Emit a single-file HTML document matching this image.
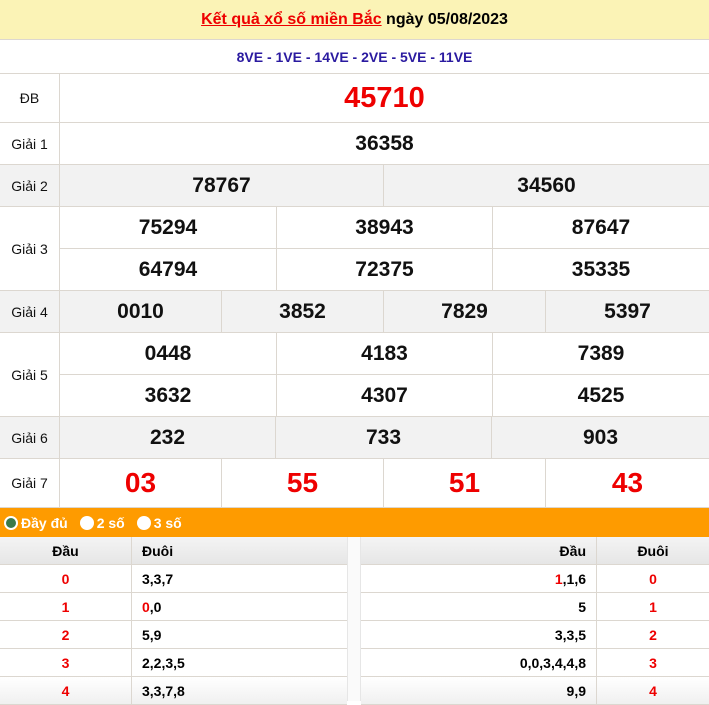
<!DOCTYPE html><html><head><meta charset="utf-8"><style>
*{margin:0;padding:0;box-sizing:border-box}
body{width:709px;height:701px;overflow:hidden;background:#fff;font-family:"Liberation Sans",Arial,sans-serif;position:relative}
.r{position:absolute;left:0;width:709px;display:flex;border-bottom:1px solid #dcd7d0}
.c{display:flex;align-items:center;justify-content:center;border-left:1px solid #dcd7d0;font-weight:bold;font-size:21px;color:#111;height:100%}
.c:first-child{border-left:none}
.l{width:59px;font-weight:normal;font-size:14px}
.g{background:#f2f2f2}
.red{color:#e00}
.sub{display:flex;flex-direction:column;flex:1;border-left:1px solid #dcd7d0}
.sub>div{flex:1;display:flex;border-bottom:1px solid #dcd7d0}
.sub>div:last-child{border-bottom:none}
.t{position:absolute;display:flex;align-items:center;font-size:14px;font-weight:bold;border-bottom:1px solid #dcd7d0;height:28px}
.t div{height:100%;display:flex;align-items:center}
</style></head><body>
<div class="r" style="top:0;height:40px;background:#fbf3b6;justify-content:center;align-items:center;font-size:16px;font-weight:bold"><span style="color:#e00;text-decoration:underline">Kết quả xổ số miền Bắc</span>&nbsp;ngày 05/08/2023</div>
<div class="r" style="top:40px;height:34px;justify-content:center;align-items:center;font-size:14px;font-weight:bold;color:#2a1aa0">8VE - 1VE - 14VE - 2VE - 5VE - 11VE</div>
<div class="r" style="top:74px;height:49px"><div class="c l">ĐB</div><div class="c red" style="flex:1;font-size:29px">45710</div></div>
<div class="r" style="top:123px;height:42px"><div class="c l">Giải 1</div><div class="c" style="flex:1">36358</div></div>
<div class="r g" style="top:165px;height:42px"><div class="c l">Giải 2</div><div class="c" style="width:324px">78767</div><div class="c" style="flex:1">34560</div></div>
<div class="r" style="top:207px;height:84px"><div class="c l">Giải 3</div><div class="sub"><div><div class="c" style="width:216px">75294</div><div class="c" style="width:216px">38943</div><div class="c" style="flex:1">87647</div></div><div><div class="c" style="width:216px">64794</div><div class="c" style="width:216px">72375</div><div class="c" style="flex:1">35335</div></div></div></div>
<div class="r g" style="top:291px;height:42px"><div class="c l">Giải 4</div><div class="c" style="width:162px">0010</div><div class="c" style="width:162px">3852</div><div class="c" style="width:162px">7829</div><div class="c" style="flex:1">5397</div></div>
<div class="r" style="top:333px;height:84px"><div class="c l">Giải 5</div><div class="sub"><div><div class="c" style="width:216px">0448</div><div class="c" style="width:216px">4183</div><div class="c" style="flex:1">7389</div></div><div><div class="c" style="width:216px">3632</div><div class="c" style="width:216px">4307</div><div class="c" style="flex:1">4525</div></div></div></div>
<div class="r g" style="top:417px;height:42px"><div class="c l">Giải 6</div><div class="c" style="width:216px">232</div><div class="c" style="width:216px">733</div><div class="c" style="flex:1">903</div></div>
<div class="r" style="top:459px;height:49px"><div class="c l">Giải 7</div><div class="c red" style="width:162px;font-size:28px">03</div><div class="c red" style="width:162px;font-size:28px">55</div><div class="c red" style="width:162px;font-size:28px">51</div><div class="c red" style="flex:1;font-size:28px">43</div></div>
<div style="position:absolute;top:508px;left:0;width:709px;height:29px;background:#fe9b00;display:flex;align-items:center;color:#fff;font-weight:bold;font-size:14px;padding-left:4px">
<span style="width:14px;height:14px;border-radius:50%;background:#3b7a4a;border:2px solid #fff;display:inline-block;margin-right:3px"></span>Đầy đủ
<span style="width:14px;height:14px;border-radius:50%;background:#fff;display:inline-block;margin:0 3px 0 12px"></span>2 số
<span style="width:14px;height:14px;border-radius:50%;background:#fff;display:inline-block;margin:0 3px 0 12px"></span>3 số</div>
<div style="position:absolute;top:537px;left:347px;width:14px;height:164px;background:#fafafa;border-left:1px solid #e6e6e6;border-right:1px solid #e6e6e6"></div>
<div class="t" style="top:537px;left:0;width:347px;background:linear-gradient(#f4f4f4,#e6e6e6)"><div style="width:131px;justify-content:center">Đầu</div><div style="border-left:1px solid #dcd7d0;padding-left:10px;flex:1">Đuôi</div></div>
<div class="t" style="top:537px;left:361px;width:348px;background:linear-gradient(#f4f4f4,#e6e6e6)"><div style="width:235px;justify-content:flex-end;padding-right:10px">Đầu</div><div style="border-left:1px solid #dcd7d0;flex:1;justify-content:center">Đuôi</div></div>
<div class="t" style="top:565px;left:0;width:347px"><div class="red" style="width:131px;justify-content:center">0</div><div style="border-left:1px solid #dcd7d0;padding-left:10px;flex:1">3,3,7</div></div>
<div class="t" style="top:593px;left:0;width:347px"><div class="red" style="width:131px;justify-content:center">1</div><div style="border-left:1px solid #dcd7d0;padding-left:10px;flex:1"><span class="red">0</span>,0</div></div>
<div class="t" style="top:621px;left:0;width:347px"><div class="red" style="width:131px;justify-content:center">2</div><div style="border-left:1px solid #dcd7d0;padding-left:10px;flex:1">5,9</div></div>
<div class="t" style="top:649px;left:0;width:347px"><div class="red" style="width:131px;justify-content:center">3</div><div style="border-left:1px solid #dcd7d0;padding-left:10px;flex:1">2,2,3,5</div></div>
<div class="t" style="top:677px;left:0;width:347px;background:linear-gradient(#fff,#f0f0f0)"><div class="red" style="width:131px;justify-content:center">4</div><div style="border-left:1px solid #dcd7d0;padding-left:10px;flex:1">3,3,7,8</div></div>
<div class="t" style="top:565px;left:361px;width:348px"><div style="width:235px;justify-content:flex-end;padding-right:10px"><span class="red">1</span>,1,6</div><div class="red" style="border-left:1px solid #dcd7d0;flex:1;justify-content:center">0</div></div>
<div class="t" style="top:593px;left:361px;width:348px"><div style="width:235px;justify-content:flex-end;padding-right:10px">5</div><div class="red" style="border-left:1px solid #dcd7d0;flex:1;justify-content:center">1</div></div>
<div class="t" style="top:621px;left:361px;width:348px"><div style="width:235px;justify-content:flex-end;padding-right:10px">3,3,5</div><div class="red" style="border-left:1px solid #dcd7d0;flex:1;justify-content:center">2</div></div>
<div class="t" style="top:649px;left:361px;width:348px"><div style="width:235px;justify-content:flex-end;padding-right:10px">0,0,3,4,4,8</div><div class="red" style="border-left:1px solid #dcd7d0;flex:1;justify-content:center">3</div></div>
<div class="t" style="top:677px;left:361px;width:348px;background:linear-gradient(#fff,#f0f0f0)"><div style="width:235px;justify-content:flex-end;padding-right:10px">9,9</div><div class="red" style="border-left:1px solid #dcd7d0;flex:1;justify-content:center">4</div></div>
</body></html>
